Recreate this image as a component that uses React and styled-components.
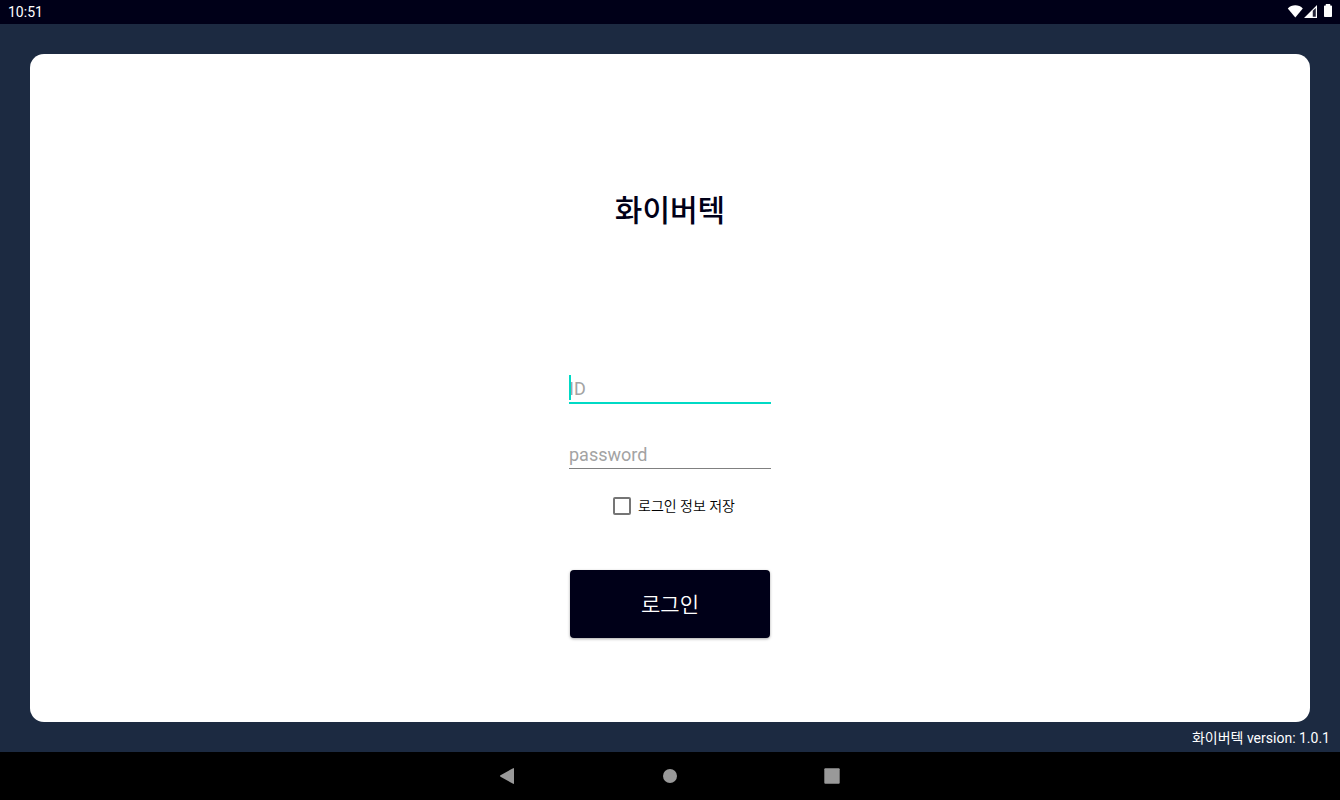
import React from "react";
import styled, { createGlobalStyle } from "styled-components";

const GlobalStyle = createGlobalStyle`
  *, *::before, *::after { box-sizing: border-box; }
  body {
    margin: 0;
    background: #1c2a41;
    font-family: Roboto, "Noto Sans CJK KR", sans-serif;
    font-size: 14px;
  }
`;

const Screen = styled.div`
  display: flex;
  flex-direction: column;
  min-height: 100vh;
`;

const StatusBar = styled.header`
  display: flex;
  align-items: center;
  justify-content: space-between;
  height: 24px;
  padding: 0 8px;
  background: #000018;
  color: #fff;
  line-height: 24px;
`;

const StatusIcons = styled.div`
  display: flex;
  align-items: center;
  height: 24px;

  svg { display: block; }
`;

const Content = styled.main`
  flex: 1;
  display: flex;
  flex-direction: column;
  padding: 30px 30px 0;
`;

const Card = styled.section`
  flex: 1;
  display: flex;
  flex-direction: column;
  align-items: center;
  padding: 135px 0 84px;
  background: #fff;
  border-radius: 14px;
`;

const Title = styled.h1`
  margin: 0;
  color: #000018;
  font-size: 30px;
  font-weight: 500;
  line-height: 44px;
`;

const LoginForm = styled.form`
  display: flex;
  flex-direction: column;
  align-items: center;
  width: 202px;
  margin-top: auto;
`;

const Field = styled.label`
  position: relative;
  display: block;
  width: 100%;
  height: 30px;
  margin-bottom: 36px;
`;

const FieldInput = styled.input`
  display: block;
  width: 100%;
  height: ${({ $active }) => ($active ? 30 : 29)}px;
  padding: 0;
  border: 0;
  border-bottom: ${({ $active }) => ($active ? "2px solid #00dac5" : "1px solid #808080")};
  border-radius: 0;
  outline: 0;
  background: transparent;
  color: #000018;
  font-family: inherit;
  font-size: 18px;
  caret-color: #00dac5;

  &::placeholder { color: #a3a3a3; opacity: 1; }
`;

const Caret = styled.span`
  position: absolute;
  top: 1px;
  left: 0;
  width: 2px;
  height: 25px;
  background: #00dac5;
`;

const Remember = styled.label`
  display: flex;
  align-items: center;
  gap: 7px;
  height: 20px;
  margin: -10px 0 54px 8px;
  color: #000;
  font-weight: 350;
  line-height: 20px;
`;

const CheckBox = styled.input`
  appearance: none;
  width: 18px;
  height: 18px;
  margin: 0;
  border: 2px solid #757575;
  border-radius: 2px;

  &:checked { border-color: #00dac5; background: #00dac5; }
`;

const LoginButton = styled.button`
  width: 200px;
  height: 68px;
  padding: 0 0 2px;
  border: 0;
  border-radius: 4px;
  background: #000018;
  box-shadow: 0 1px 3px rgba(0, 0, 0, 0.35);
  color: #fff;
  font-family: inherit;
  font-size: 21px;
  font-weight: 350;
`;

const Version = styled.footer`
  height: 30px;
  margin-right: -20px;
  color: #fff;
  line-height: 32px;
  text-align: right;
`;

const NavBar = styled.nav`
  display: flex;
  align-items: center;
  justify-content: center;
  gap: 138px;
  height: 48px;
  background: #000;
`;

const NavButton = styled.button`
  width: 24px;
  height: 24px;
  padding: 0;
  border: 0;
  background: transparent;

  svg { display: block; }
`;

export default function App() {
  return (
    <Screen>
      <GlobalStyle />
      <StatusBar>
        <time>10:51</time>
        <StatusIcons>
          <svg width="46" height="24" viewBox="0 0 46 24" fill="#fff" aria-hidden="true">
            <path d="M1.8 8.4C5.5 4.3 13.1 4.3 16.8 8.4L9.3 17.6Z" />
            <path d="M18 18L31 5V18Z M26.8 10.8V16.8H29.8V7.9Z" fillRule="evenodd" />
            <path d="M29 8L30 7V17H27V10Z" fill="#fff" opacity="0.15" />
            <path d="M39.8 4h4.4v1.4h1A.8.8 0 0 1 46 6.2v10a.8.8 0 0 1-.8.8h-6.4a.8.8 0 0 1-.8-.8v-10a.8.8 0 0 1 .8-.8h1Z" />
          </svg>
        </StatusIcons>
      </StatusBar>
      <Content>
        <Card>
          <Title>화이버텍</Title>
          <LoginForm onSubmit={(event) => event.preventDefault()}>
            <Field>
              <FieldInput $active type="text" placeholder="ID" aria-label="ID" />
              <Caret />
            </Field>
            <Field>
              <FieldInput type="password" placeholder="password" aria-label="password" />
            </Field>
            <Remember>
              <CheckBox type="checkbox" />
              로그인 정보 저장
            </Remember>
            <LoginButton type="submit">로그인</LoginButton>
          </LoginForm>
        </Card>
        <Version>화이버텍 version: 1.0.1</Version>
      </Content>
      <NavBar>
        <NavButton type="button" aria-label="Back">
          <svg width="24" height="24" viewBox="0 0 24 24" fill="#999">
            <path d="M18 4.7V19.3Q18 20.3 17.1 19.8L4.5 12.7Q3.5 12 4.5 11.3L17.1 4.2Q18 3.7 18 4.7Z" />
          </svg>
        </NavButton>
        <NavButton type="button" aria-label="Home">
          <svg width="24" height="24" viewBox="0 0 24 24" fill="#999">
            <circle cx="12" cy="12" r="7" />
          </svg>
        </NavButton>
        <NavButton type="button" aria-label="Recent apps">
          <svg width="24" height="24" viewBox="0 0 24 24" fill="#999">
            <rect x="4.3" y="4.3" width="15.4" height="15.4" rx="1" />
          </svg>
        </NavButton>
      </NavBar>
    </Screen>
  );
}
